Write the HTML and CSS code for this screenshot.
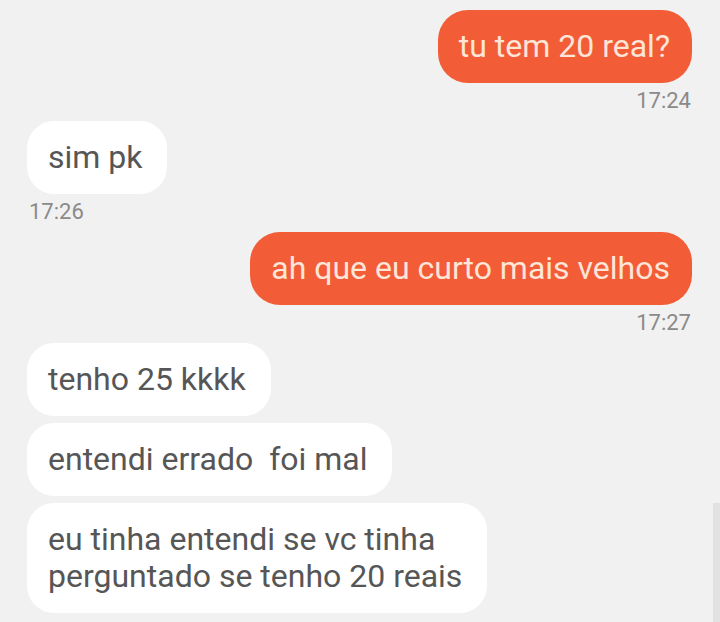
FILE: index.html
```html
<!DOCTYPE html>
<html>
<head>
<meta charset="utf-8">
<link rel="stylesheet" href="styles.css">
</head>
<body>
<div class="chat">
  <div class="msg sent">
    <div class="bubble out">tu tem 20 real?</div>
    <div class="time">17:24</div>
  </div>
  <div class="msg recv">
    <div class="bubble in">sim pk</div>
    <div class="time">17:26</div>
  </div>
  <div class="msg sent">
    <div class="bubble out">ah que eu curto mais velhos</div>
    <div class="time">17:27</div>
  </div>
  <div class="msg recv group">
    <div class="bubble in">tenho 25 kkkk</div>
    <div class="bubble in">entendi errado&nbsp; foi mal</div>
    <div class="bubble in">eu tinha entendi se vc tinha<br>perguntado se tenho 20 reais</div>
  </div>
</div>
<div class="scrollbar"></div>
</body>
</html>
```

FILE: styles.css
```css
html, body {
  margin: 0;
  padding: 0;
  background: #f1f1f1;
  width: 720px;
  height: 622px;
  overflow: hidden;
  font-family: Roboto, "Liberation Sans", sans-serif;
}
.chat {
  display: flex;
  flex-direction: column;
  padding: 10px 28px 0 27px;
}
.msg {
  display: flex;
  flex-direction: column;
}
.sent {
  align-items: flex-end;
}
.recv {
  align-items: flex-start;
}
.bubble {
  font-size: 32px;
  line-height: 37px;
  padding: 18px 25px 18px 21px;
  border-radius: 27px;
}
.out {
  background: #f25c37;
  color: #fde5d8;
  padding-right: 22px;
  border-radius: 30px;
}
.in {
  background: #ffffff;
  color: #565656;
}
.time {
  font-size: 22px;
  line-height: 26px;
  color: #8a8a8a;
  margin-top: 5px;
  margin-bottom: 7px;
}
.sent .time {
  margin-right: 1px;
}
.recv .time {
  margin-left: 2px;
}
.group {
  gap: 7px;
}
.scrollbar {
  position: absolute;
  right: 0;
  top: 503px;
  width: 7px;
  height: 119px;
  background: #e2e2e2;
}
```
